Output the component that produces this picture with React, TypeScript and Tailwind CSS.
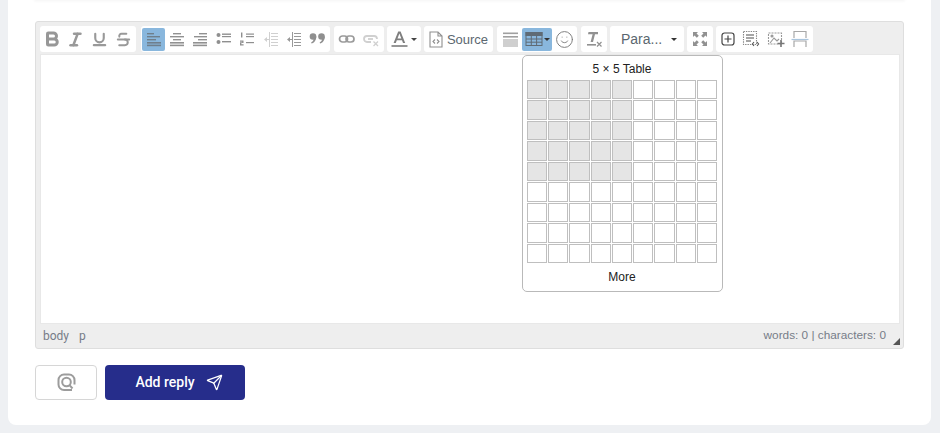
import { Bold, Italic, Strikethrough, Underline, Send, Smile } from "lucide-react";
import type { ReactNode } from "react";

const Group = ({ className, children }: { className: string; children: ReactNode }) => (
    <div className={`flex h-[26px] shrink-0 items-center justify-around rounded-[3px] bg-white px-px ${className}`}>
        {children}
    </div>
);

const Btn = ({ active, children }: { active?: boolean; children: ReactNode }) => (
    <div className={`flex h-[23px] w-[23.7px] items-center justify-center rounded-[2px] ${active ? "bg-[#89b7dd]" : ""}`}>
        {children}
    </div>
);

// toolbar glyph made of horizontal bars: [x, y, width]
const Bars = ({ rows, color = "#919191" }: { rows: number[][]; color?: string }) => (
    <svg width="16" height="16" viewBox="0 0 16 16" fill={color}>
        {rows.map((r, i) => (
            <rect key={i} x={r[0]} y={r[1]} width={r[2]} height={r[3] ?? 1.4} />
        ))}
    </svg>
);

const Outdent = ({ color }: { color: string }) => (
    <svg width="16" height="16" viewBox="0 0 16 16" fill={color}>
        <rect x="8" y="2" width="7" height="1" />
        <rect x="8" y="5" width="7" height="1" />
        <rect x="8" y="8" width="7" height="1" />
        <rect x="8" y="11" width="7" height="1" />
        <rect x="8" y="14" width="7" height="1" />
        <rect x="6" y="1" width="1" height="15" />
        <path d="M1 8.5 L4 6 V8 H6 V9 H4 V11 Z" />
    </svg>
);

const gridCells = Array.from({ length: 81 }, (_, i) => i);

export default function App() {
    return (
        <div className="h-[433px] w-[940px] overflow-hidden bg-[#eef0f3] pb-2 pl-2 pr-[9px] font-['Roboto',sans-serif]">
            <div className="flex h-full flex-col rounded-b-lg bg-white px-[27px]">
                <div className="h-0 shadow-[0_0_3px_1px_#f1f1f1]" />
                <div className="relative mt-[21px] flex h-[328px] w-[869px] flex-col rounded-[3px] border border-[#dedede] bg-[#eeeeee]">
                    {/* toolbar */}
                    <div className="flex h-[32px] items-start pl-[3.5px] pt-1">
                        <Group className="w-[96.5px]">
                            <Btn><Bold size={18} strokeWidth={4} color="#979797" /></Btn>
                            <Btn><Italic size={17} strokeWidth={3.6} color="#999999" /></Btn>
                            <Btn><Underline size={17} strokeWidth={3} color="#999999" /></Btn>
                            <Btn><Strikethrough size={17} strokeWidth={2.8} color="#999999" /></Btn>
                        </Group>
                        <Group className="ml-[5px] w-[189px]">
                            <Btn active><Bars color="#6f7f8c" rows={[[1, 2, 7], [1, 5, 13], [1, 8, 9], [1, 11, 14, 1.6], [1, 13.6, 14, 1.6]]} /></Btn>
                            <Btn><Bars rows={[[4, 2, 8], [1, 5, 14], [4, 8, 8], [1, 11, 14, 1.6], [1, 13.6, 14, 1.6]]} /></Btn>
                            <Btn><Bars rows={[[7, 2, 8], [2, 5, 13], [6, 8, 9], [1, 11, 14, 1.6], [1, 13.6, 14, 1.6]]} /></Btn>
                            <Btn>
                                <svg width="16" height="16" viewBox="0 0 16 16" fill="#8f8f8f">
                                    <circle cx="2.5" cy="4" r="2" />
                                    <circle cx="2.5" cy="11" r="2" />
                                    <rect x="6" y="2.5" width="9" height="1.4" />
                                    <rect x="6" y="5" width="9" height="1.2" />
                                    <rect x="6" y="10" width="9" height="1.4" />
                                </svg>
                            </Btn>
                            <Btn>
                                <svg width="16" height="16" viewBox="0 0 16 16" fill="#8f8f8f">
                                    <rect x="2" y="1.5" width="1.4" height="5" />
                                    <path d="M1 9.5 H4.5 V12 H2.4 V13.2 H4.6 V14.4 H1 V11.2 H3.2 V10.7 H1 Z" />
                                    <rect x="7" y="2.5" width="8" height="1.2" />
                                    <rect x="7" y="5" width="8" height="1.2" />
                                    <rect x="7" y="11" width="8" height="1.2" />
                                </svg>
                            </Btn>
                            <Btn><Outdent color="#d0d0d0" /></Btn>
                            <Btn><Outdent color="#999999" /></Btn>
                            <Btn>
                                <svg width="17" height="16" viewBox="0 0 17 16" fill="#8f8f8f">
                                    <circle cx="4" cy="5.5" r="3.3" />
                                    <path d="M7.3 5.5 C7.3 9.5 5 12 2.5 12.6 L2.2 11.2 C3.6 10.6 4.6 9.5 4.6 8 Z" />
                                    <circle cx="12.5" cy="5.5" r="3.3" />
                                    <path d="M15.8 5.5 C15.8 9.5 13.5 12 11 12.6 L10.7 11.2 C12.1 10.6 13.1 9.5 13.1 8 Z" />
                                </svg>
                            </Btn>
                        </Group>
                        <Group className="ml-1 w-[50px]">
                            <Btn>
                                <svg width="18" height="16" viewBox="0 0 18 16" fill="none" stroke="#9b9b9b" strokeWidth="1.7">
                                    <rect x="1.5" y="5" width="8" height="6" rx="3" />
                                    <rect x="8" y="5" width="8" height="6" rx="3" />
                                </svg>
                            </Btn>
                            <Btn>
                                <svg width="18" height="16" viewBox="0 0 18 16" fill="none" stroke="#d0d0d0" strokeWidth="1.8">
                                    <path d="M9 11 H5 a3 3 0 0 1 0 -6 H12 a3 3 0 0 1 3 3" />
                                    <path d="M6 8 H11" />
                                    <path d="M11.5 10.5 L16 15 M16 10.5 L11.5 15" strokeWidth="1.3" />
                                </svg>
                            </Btn>
                        </Group>
                        <Group className="ml-[3px] w-[34px]">
                            <div className="flex items-center gap-[3px]">
                                <svg width="17" height="18" viewBox="0 0 17 18">
                                    <path d="M2.6 13 L7.2 1.5 H9.6 L14.2 13 H12 L11 10.3 H5.8 L4.8 13 Z M6.5 8.5 H10.3 L8.4 3.6 Z" fill="#7f7f7f" fillRule="evenodd" />
                                    <rect x="0.5" y="15" width="16" height="2" fill="#969696" />
                                </svg>
                                <div className="h-0 w-0 border-x-[3px] border-t-[3px] border-x-transparent border-t-[#444]" />
                            </div>
                        </Group>
                        <Group className="ml-[3px] w-[69px]">
                            <div className="flex items-center gap-[4px]">
                                <svg width="14" height="17" viewBox="0 0 14 17" fill="none" stroke="#8f8f8f" strokeWidth="1.1">
                                    <path d="M1 1 H9 L13 5 V16 H1 Z M9 1 V5 H13" />
                                    <path d="M6 8.5 L4 10.5 L6 12.5 M8 8.5 L10 10.5 L8 12.5" />
                                </svg>
                                <span className="font-['Liberation_Sans',sans-serif] text-[13px] leading-none text-[#5b6770]">Source</span>
                            </div>
                        </Group>
                        <Group className="ml-1 w-[80px]">
                            <Btn><Bars color="#a0a0a0" rows={[[1, 1.5, 15, 1.6], [1, 5, 15, 1.6], [1, 8.5, 15, 1], [1, 10.5, 15, 1], [1, 12.5, 15, 1], [1, 14.5, 15, 1]]} /></Btn>
                            <div className="flex h-[23px] w-[31px] items-center justify-center gap-px rounded-[2px] bg-[#89b7dd]">
                                <svg width="18" height="16" viewBox="0 0 18 16" fill="none" stroke="#5f6b75" strokeWidth="1">
                                    <rect x="1" y="1.5" width="16" height="13" fill="#89b7dd" />
                                    <rect x="1" y="1.5" width="16" height="3" fill="#5f6b75" />
                                    <path d="M1 8 H17 M1 11.2 H17 M6.3 4.5 V14.5 M11.6 4.5 V14.5" />
                                </svg>
                                <div className="h-0 w-0 border-x-[3px] border-t-[3px] border-x-transparent border-t-[#333]" />
                            </div>
                            <Btn><Smile size={19} strokeWidth={1.2} color="#7a7a7a" /></Btn>
                        </Group>
                        <Group className="ml-1 w-[26px]">
                            <svg width="18" height="18" viewBox="0 0 18 18">
                                <path d="M3.5 2 H13 V4.2 H10 L8 12 H5.6 L7.6 4.2 H3 Z" fill="#919191" />
                                <rect x="2" y="14" width="9" height="1.6" fill="#919191" />
                                <path d="M12 12 L16.5 16.5 M16.5 12 L12 16.5" stroke="#919191" strokeWidth="1.2" />
                            </svg>
                        </Group>
                        <Group className="ml-[3px] w-[74px]">
                            <div className="flex w-full items-center justify-between pl-[10px] pr-[6px]">
                                <span className="font-['Liberation_Sans',sans-serif] text-[14px] leading-none text-[#5b6770]">Para...</span>
                                <div className="h-0 w-0 border-x-[3px] border-t-[3px] border-x-transparent border-t-[#333]" />
                            </div>
                        </Group>
                        <Group className="ml-[3px] w-[26px]">
                            <svg width="18" height="18" viewBox="0 0 18 18" fill="#919191">
                                <path d="M2 2 H7 L5.5 3.5 L7.8 5.8 L5.8 7.8 L3.5 5.5 L2 7 Z" />
                                <path d="M16 2 H11 L12.5 3.5 L10.2 5.8 L12.2 7.8 L14.5 5.5 L16 7 Z" />
                                <path d="M2 16 H7 L5.5 14.5 L7.8 12.2 L5.8 10.2 L3.5 12.5 L2 11 Z" />
                                <path d="M16 16 H11 L12.5 14.5 L10.2 12.2 L12.2 10.2 L14.5 12.5 L16 11 Z" />
                            </svg>
                        </Group>
                        <Group className="ml-[3px] w-[97px]">
                            <svg width="16" height="16" viewBox="0 0 16 16" fill="none" stroke="#444" strokeWidth="1.2">
                                <rect x="2" y="2" width="12" height="12" rx="2.5" />
                                <path d="M8 4.5 V11.5 M4.5 8 H11.5" />
                            </svg>
                            <svg width="18" height="18" viewBox="0 0 18 18" fill="none" stroke="#888" strokeWidth="1.1">
                                <rect x="1.5" y="1.5" width="13" height="13" strokeDasharray="1.4 1" />
                                <path d="M4 5 H12 M4 8 H12 M4 11 H9" strokeWidth="1.4" />
                                <path d="M12 12 L10.4 14 L12 16 M15 12 L16.6 14 L15 16" stroke="#555" />
                            </svg>
                            <svg width="18" height="18" viewBox="0 0 18 18" fill="none" stroke="#999" strokeWidth="1.1">
                                <rect x="1.5" y="3" width="13" height="11" strokeDasharray="2 1" />
                                <path d="M3 13 L7 8 L10 11 L12 9" />
                                <circle cx="5" cy="6" r="1" fill="#999" />
                                <path d="M14 10 V17 M10.5 13.5 H17.5" stroke="#777" strokeWidth="1.6" />
                            </svg>
                            <svg width="18" height="18" viewBox="0 0 18 18" fill="none" stroke="#a8a8a8" strokeWidth="1.2">
                                <path d="M3 8 V1.5 H15 V8" />
                                <path d="M3 17 V11 H15 V17" />
                                <path d="M0.5 9.5 H17.5" stroke="#a9c4dc" />
                            </svg>
                        </Group>
                    </div>
                    {/* editing area */}
                    <div className="mx-[3.5px] h-[270px] border border-[#e8e8e8] bg-white" />
                    {/* status bar */}
                    <div className="relative flex flex-1 items-center justify-between pl-[7px] pr-[17px] text-[12px] leading-none text-[#767c88]">
                        <div className="flex gap-[10px]">
                            <span>body</span>
                            <span>p</span>
                        </div>
                        <span className="font-['Liberation_Sans',sans-serif] text-[11.8px]">words: 0 | characters: 0</span>
                        <div className="absolute bottom-[3px] right-[3px] h-0 w-0 border-b-[7px] border-l-[7px] border-b-[#555] border-l-transparent" />
                    </div>
                    {/* table picker popup */}
                    <div className="absolute left-[485.5px] top-[33px] flex h-[237px] w-[201px] flex-col items-center rounded-[5px] border border-[#b9b9b9] bg-white pt-[6px] font-['Liberation_Sans',sans-serif] text-[12px] text-[#222]">
                        <span className="h-[18px] leading-[14px]">5 × 5 Table</span>
                        <div className="grid h-[183px] w-[190px] grid-cols-9 grid-rows-9 gap-px">
                            {gridCells.map((i) => (
                                <div
                                    key={i}
                                    className={`border border-[#bfbfbf] ${i % 9 < 5 && i < 45 ? "bg-[#e5e5e5]" : "bg-white"}`}
                                />
                            ))}
                        </div>
                        <span className="mt-[7px] leading-[14px]">More</span>
                    </div>
                </div>
                {/* actions */}
                <div className="mt-4 flex gap-2">
                    <button className="flex h-[35px] w-[62px] items-center justify-center rounded-[4px] border border-[#d6d6d6] bg-white">
                        <svg width="19" height="19" viewBox="0 0 19 19" fill="none" stroke="#9c9c9c" strokeWidth="2">
                            <path d="M15 17 H7 A5.5 5.5 0 0 1 1.5 11.5 V7 A5.5 5.5 0 0 1 7 1.5 H12 A5.5 5.5 0 0 1 17.5 7 V11.5" />
                            <circle cx="9.5" cy="9" r="4.3" />
                            <path d="M12.5 12.2 L15.5 15.5" />
                        </svg>
                    </button>
                    <button className="flex h-[35px] w-[140px] items-center justify-center gap-[11px] rounded-[4px] bg-[#262d8b] pl-2 text-[14px] font-medium text-white">
                        Add reply
                        <Send size={17} strokeWidth={1.8} />
                    </button>
                </div>
            </div>
        </div>
    );
}
